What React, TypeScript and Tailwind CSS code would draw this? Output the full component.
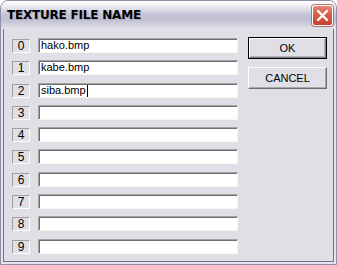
import React from "react";

const rows: { label: string; value: string; h: string; cursor?: boolean }[] = [
  { label: "0", value: "hako.bmp", h: "h-[22px]" },
  { label: "1", value: "kabe.bmp", h: "h-[23px]" },
  { label: "2", value: "siba.bmp", h: "h-[22px]", cursor: true },
  { label: "3", value: "", h: "h-[22px]" },
  { label: "4", value: "", h: "h-[22px]" },
  { label: "5", value: "", h: "h-[23px]" },
  { label: "6", value: "", h: "h-[22px]" },
  { label: "7", value: "", h: "h-[22px]" },
  { label: "8", value: "", h: "h-[23px]" },
  { label: "9", value: "", h: "h-[22px]" },
];

function CloseIcon() {
  return (
    <svg width="13" height="13" viewBox="0 0 13 13">
      <path d="M2 2 L11 11 M11 2 L2 11" stroke="#ffffff" strokeWidth="2.4" strokeLinecap="round" />
    </svg>
  );
}

export default function App() {
  return (
    <div
      className="w-[337px] h-[265px] bg-white"
      style={{ fontFamily: '"Liberation Sans", Arial, sans-serif' }}
    >
      <div className="w-full h-full flex flex-col rounded-t-[8px] border border-[#8e8ea8] overflow-hidden bg-[#e4e4ec]">
        {/* Title bar */}
        <div className="h-[28px] flex items-center justify-between pl-[6px] pr-[3px] bg-[linear-gradient(to_bottom,#fefeff_0%,#ececf2_18%,#c2c2d3_50%,#c0c0d2_68%,#e2e2ea_100%)]">
          <span className="text-[12px] font-bold text-black tracking-[-0.2px] [text-shadow:1px_1px_0_#a9a9bc]" style={{ fontFamily: '"DejaVu Sans", sans-serif' }}>
            TEXTURE FILE NAME
          </span>
          <div className="w-[21px] h-[21px] mt-[1px] rounded-[3px] border border-white flex items-center justify-center bg-[linear-gradient(to_bottom,#e68a78_0%,#d9604c_40%,#c8412e_100%)] shadow-[0_0_0_1px_#b6766c]">
            <CloseIcon />
          </div>
        </div>
        {/* Frame */}
        <div className="flex-1 px-[2px] pb-[2px] flex">
          <div className="flex-1 border-x border-b border-[#6f6f90] bg-[#e0dfe6] flex pl-[8px] pt-[8px]">
            <div className="flex flex-col pt-[1px]">
              {rows.map((r) => (
                <div key={r.label} className={`${r.h} flex items-start`}>
                  <div className="mt-[1px] w-[18px] h-[14px] border border-t-[#a0a0a0] border-l-[#a0a0a0] border-r-white border-b-white flex items-center justify-center text-[12px] leading-none text-black">
                    {r.label}
                  </div>
                  <div className="ml-[8px] w-[200px] h-[15px] bg-white border-t border-l border-t-[#a4a4a4] border-l-[#a4a4a4] border-r border-b border-r-[#f6f6ee] border-b-[#f6f6ee] shadow-[inset_1px_1px_0_#6e6e6e] flex items-center pl-[2px] text-[11px] leading-none text-black">
                    <span>{r.value}</span>
                    {r.cursor && <span className="ml-[1px] w-px h-[12px] bg-black" />}
                  </div>
                </div>
              ))}
            </div>
            <div className="ml-[10px] flex flex-col gap-[8px]">
              <div className="w-[79px] h-[22px] border border-black">
                <div className="w-full h-full border-t border-l border-white border-r border-b border-r-[#808080] border-b-[#808080] shadow-[inset_-1px_-1px_0_#b0b0b0] flex items-center justify-center text-[11px] text-black">
                  OK
                </div>
              </div>
              <div className="w-[79px] h-[22px] border-t border-l border-white border-r border-b border-r-[#6e6e6e] border-b-[#6e6e6e] shadow-[inset_-1px_-1px_0_#a8a8a8] flex items-center justify-center text-[11px] text-black">
                CANCEL
              </div>
            </div>
          </div>
        </div>
      </div>
    </div>
  );
}
